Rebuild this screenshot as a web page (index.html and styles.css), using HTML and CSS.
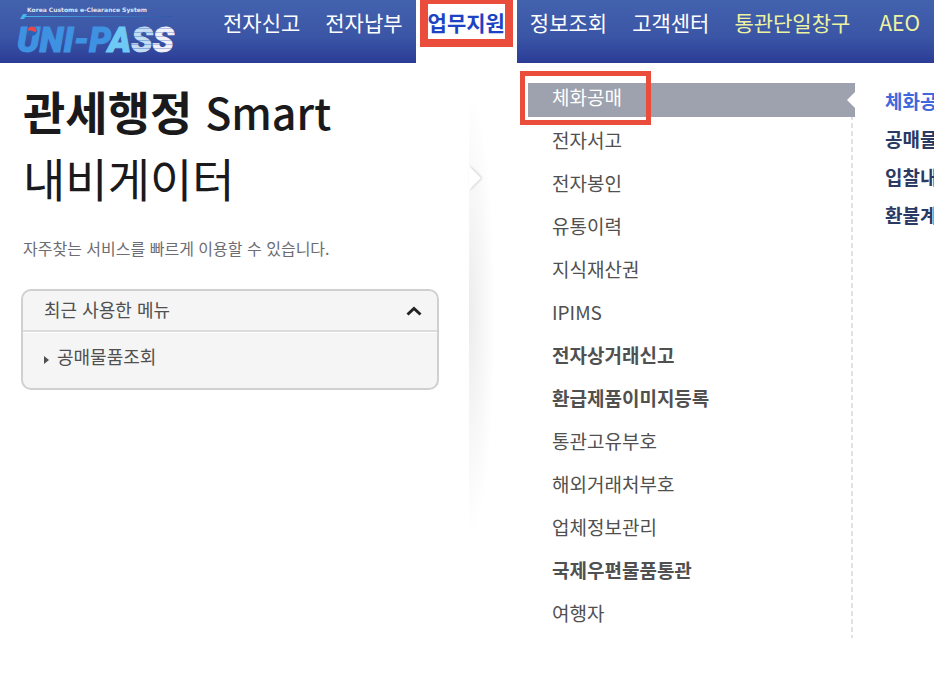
FILE: index.html
```html
<!DOCTYPE html>
<html lang="ko">
<head>
  <meta charset="UTF-8">
  <title>UNI-PASS 업무지원</title>
  <link rel="stylesheet" href="styles.css">
</head>

<body>
  <header class="header">
    <a class="logo" href="#" aria-label="UNI-PASS">
      <svg width="160" height="58" viewBox="0 0 160 58">
        <defs>
          <linearGradient id="line" x1="0" y1="0" x2="1" y2="0">
            <stop offset="0" stop-color="#48b4ee"/>
            <stop offset="1" stop-color="#2f57a8"/>
          </linearGradient>
          <pattern id="stripe1" width="4" height="4" patternUnits="userSpaceOnUse">
            <rect width="4" height="4" fill="#c4dcf4"/>
            <rect width="4" height="1" fill="#86aedd"/>
          </pattern>
          <pattern id="stripe2" width="4" height="4" patternUnits="userSpaceOnUse">
            <rect width="4" height="4" fill="#f0f2fa"/>
            <rect width="4" height="1" fill="#b3bee2"/>
          </pattern>
        </defs>
        <text class="logo-sub" x="11" y="12">Korea Customs e-Clearance System</text>
        <rect x="8" y="16" width="148" height="1" fill="url(#line)"/>
        <path d="M4 19l3-5h4l-3 5z" fill="#48b4ee"/>
        <text class="logo-name" x="1" y="52"><tspan fill="#3f92e2" stroke="#3f92e2">UNI-P</tspan><tspan fill="#6fc9f5" stroke="#6fc9f5">A</tspan><tspan fill="url(#stripe1)" stroke="url(#stripe1)">S</tspan><tspan fill="url(#stripe2)" stroke="url(#stripe2)">S</tspan></text>
        <circle cx="16" cy="31" r="5" fill="#2b62b8"/>
        <path d="M11.500 31a4.500 4.500 0 0 1 9 0c-2 3-4-2-9 0z" fill="#e8474c"/>
      </svg>
    </a>
    <nav class="gnb">
      <a href="#">전자신고</a>
      <a href="#">전자납부</a>
      <a href="#" class="on">업무지원</a>
      <a href="#">정보조회</a>
      <a href="#">고객센터</a>
      <a href="#" class="point">통관단일창구</a>
      <a href="#" class="point aeo">AEO</a>
    </nav>
  </header>

  <main class="content">
    <section class="navi">
      <h1><strong>관세행정 <span class="en">Smart</span></strong><br>내비게이터</h1>
      <p class="desc">자주찾는 서비스를 빠르게 이용할 수 있습니다.</p>
      <div class="recent">
        <button type="button" class="recent-title">
          최근 사용한 메뉴
          <svg width="16" height="10" viewBox="0 0 16 10"><path d="M1.500 8.500L8 2.500l6.500 6" fill="none" stroke="#222" stroke-width="3"/></svg>
        </button>
        <ul class="recent-list">
          <li><a href="#">공매물품조회</a></li>
        </ul>
      </div>
    </section>

    <section class="depth2">
      <svg class="arrow" width="20" height="32" viewBox="0 0 20 32"><path d="M0 4l12 12L0 28" fill="#fff"/></svg>
      <ul class="menu">
        <li class="on"><a href="#">체화공매</a></li>
        <li><a href="#">전자서고</a></li>
        <li><a href="#">전자봉인</a></li>
        <li><a href="#">유통이력</a></li>
        <li><a href="#">지식재산권</a></li>
        <li><a href="#">IPIMS</a></li>
        <li><a href="#" class="bold">전자상거래신고</a></li>
        <li><a href="#" class="bold">환급제품이미지등록</a></li>
        <li><a href="#">통관고유부호</a></li>
        <li><a href="#">해외거래처부호</a></li>
        <li><a href="#">업체정보관리</a></li>
        <li><a href="#" class="bold">국제우편물품통관</a></li>
        <li><a href="#">여행자</a></li>
      </ul>
    </section>

    <section class="depth3">
      <ul>
        <li><a href="#" class="on">체화공매</a></li>
        <li><a href="#">공매물품조회</a></li>
        <li><a href="#">입찰내역</a></li>
        <li><a href="#">환불계좌</a></li>
      </ul>
    </section>
  </main>
</body>

</html>
```
FILE: styles.css
```css
*,
*::before,
*::after {
  box-sizing: border-box;
}

body {
  margin: 0;
  background: #fff;
  color: #505050;
  font-family: "Noto Sans CJK KR", sans-serif;
  overflow-x: hidden;
}

a {
  color: inherit;
  text-decoration: none;
}

ul {
  list-style: none;
  margin: 0;
  padding: 0;
}

/* 상단 */
.header {
  display: flex;
  height: 63px;
  background: linear-gradient(#4362ae, #3a55a5 60%, #2b3c96);
  overflow: hidden;
}

.logo {
  flex: none;
  width: 211px;
  padding-left: 16px;
}

.logo svg {
  display: block;
  overflow: visible;
}

.logo-sub {
  font: bold 6px "DejaVu Sans", sans-serif;
  fill: #dbe4f6;
}

.logo-name {
  font: italic 900 35px Roboto, sans-serif;
  stroke-width: 1px;
}

.gnb {
  display: flex;
  gap: 1px;
  white-space: nowrap;
}

.gnb a {
  position: relative;
  padding: 0 12px;
  color: #fff;
  font-size: 21px;
  line-height: 44px;
}

.gnb .on {
  background: #fff;
  color: #1c43c4;
  font-weight: bold;
}

.gnb .on::after {
  content: "";
  position: absolute;
  top: -4px;
  left: 4px;
  right: 4px;
  height: 51px;
  border: 8px solid #eb4d3d;
}

.gnb .point {
  color: #eef3a0;
}

.gnb .aeo {
  margin-left: 4px;
}

/* 본문 */
.content {
  display: grid;
  grid-template-columns: 469fr 386fr 79fr;
}

.content section {
  min-width: 0;
}

.navi {
  padding: 14px 30px 0 21px;
}

.navi h1 {
  margin: 0;
  padding-left: 2px;
  color: #1a1a1c;
  font-size: 46px;
  font-weight: 400;
  line-height: 66px;
  white-space: nowrap;
}

.navi h1 strong {
  font-weight: bold;
}

.navi h1 .en {
  font-size: 43px;
  font-weight: 500;
}

.desc {
  margin: 26px 0 29px;
  padding-left: 2px;
  color: #6c6d72;
  font-size: 16px;
  line-height: 24px;
}

.recent {
  border: 2px solid #d0d0d0;
  border-radius: 10px;
  background: #f5f5f5;
  font-size: 18px;
}

.recent-title {
  display: flex;
  justify-content: space-between;
  align-items: center;
  width: 100%;
  height: 41px;
  padding: 0 15px 4px 21px;
  border: 0;
  border-bottom: 2px solid #dcdcdc;
  background: none;
  color: #505050;
  font: inherit;
}

.recent-title svg {
  margin-top: 4px;
}

.recent-list {
  padding: 9px 21px 18px;
  border-top: 1px solid #fff;
  line-height: 28px;
}

.recent-list a::before {
  content: "";
  display: inline-block;
  margin-right: 8px;
  border: 4px solid transparent;
  border-left: 5px solid #505050;
  border-right: 0;
}

.depth2 {
  position: relative;
  padding: 20px 0 0 59px;
}

/* 왼쪽 그림자 */
.depth2::before {
  content: "";
  position: absolute;
  top: 30px;
  left: 0;
  width: 26px;
  height: 445px;
  background: radial-gradient(ellipse 26px 222px at 0 50%, #ececec, #f5f5f5 45%, #fff);
}

.arrow {
  position: absolute;
  top: 99px;
  left: 0;
  filter: drop-shadow(1px 0 1px #ccc);
}

.menu {
  display: flex;
  flex-direction: column;
  gap: 9px;
  padding-bottom: 5px;
  background: repeating-linear-gradient(#e2e2e4 0 5px, #fff 5px 8px) right 2px top / 2px 100% no-repeat;
}

.menu li {
  position: relative;
  padding: 0 24px 6px;
  font-size: 19px;
  line-height: 28px;
  white-space: nowrap;
}

.menu .bold {
  font-weight: bold;
}

.menu .on {
  background: #9ea2af;
  color: #fff;
}

.menu .on::before {
  content: "";
  position: absolute;
  top: 9px;
  right: 0;
  border: 8px solid transparent;
  border-right-color: #fff;
  border-left: 0;
}

.menu .on::after {
  content: "";
  position: absolute;
  top: -12px;
  left: -8px;
  width: 131px;
  height: 54px;
  border: 5px solid #eb4d3d;
}

.depth3 {
  padding: 19px 0 0 30px;
  overflow: hidden;
  white-space: nowrap;
  color: #2a3a63;
  font-size: 19px;
  font-weight: bold;
  line-height: 38px;
}

.depth3 .on {
  color: #3e68dc;
}
```
